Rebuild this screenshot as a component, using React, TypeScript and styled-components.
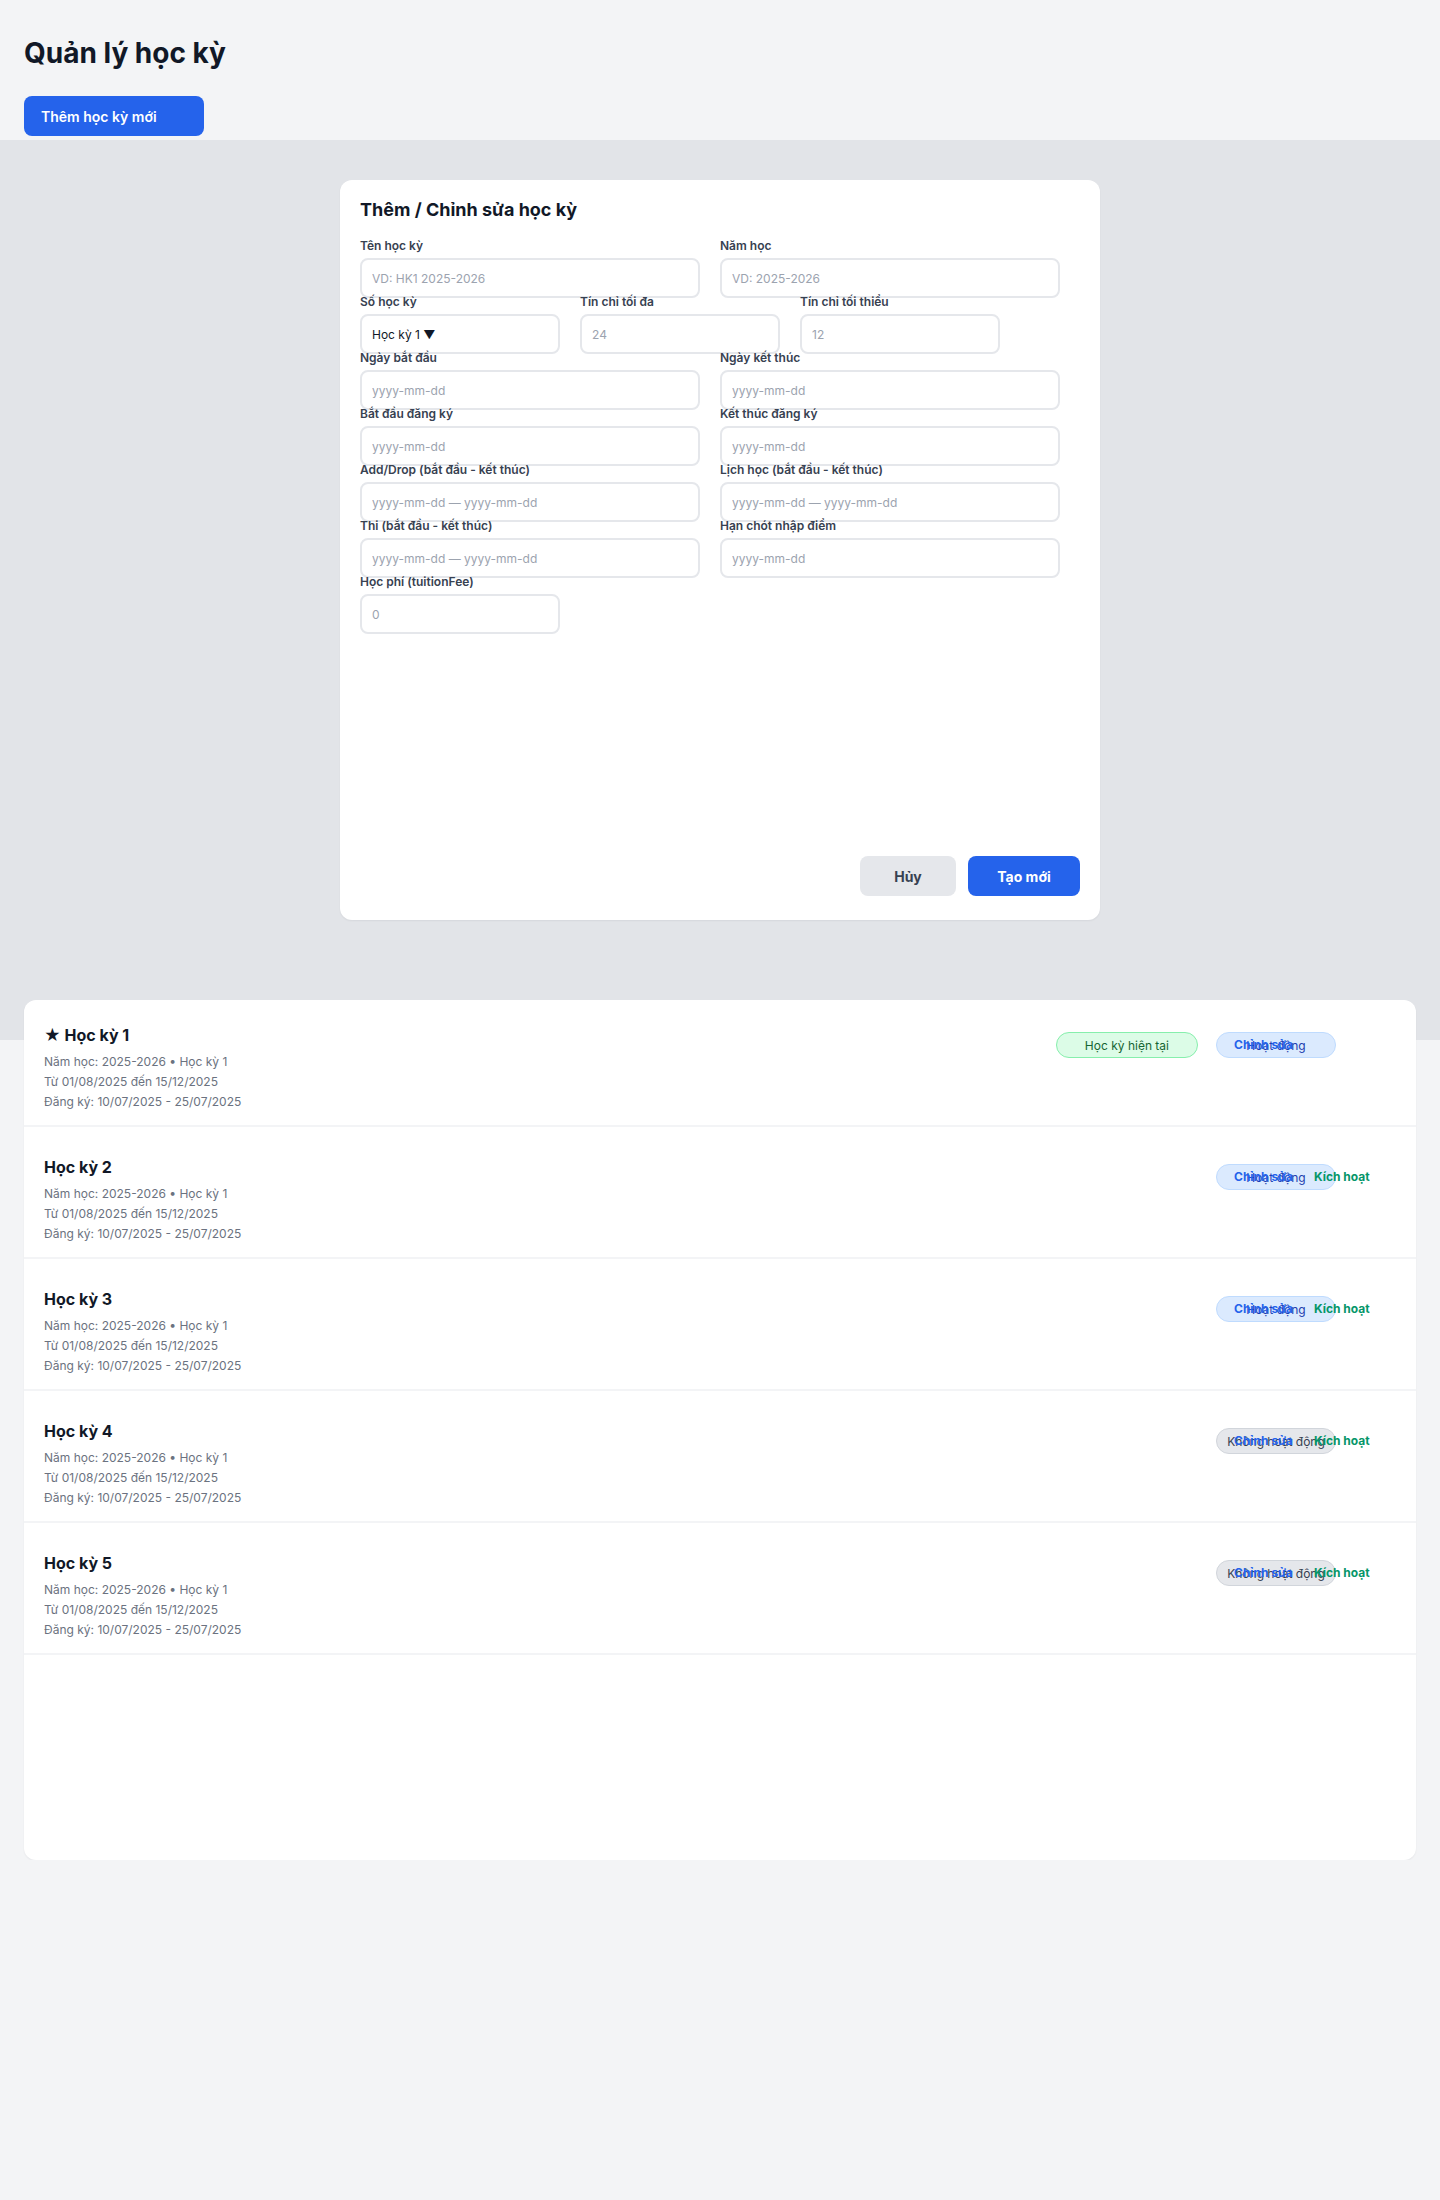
import React from 'react';
import styled, { createGlobalStyle } from 'styled-components';

const GlobalStyle = createGlobalStyle`
  html, body { margin: 0; padding: 0; background: #f3f4f6; }
  body { font-family: Inter, "Noto Sans", "DejaVu Sans", sans-serif; color: #111827; }
  *, *::before, *::after { box-sizing: border-box; }
  button, input { font-family: inherit; }
`;

const Header = styled.header`
  padding: 36px 24px 4px;
`;

const PageTitle = styled.h1`
  margin: 0 0 26px;
  font-size: 28px;
  line-height: 34px;
  font-weight: 700;
  color: #111827;
`;

const PrimaryButton = styled.button`
  display: block;
  width: 180px;
  height: 40px;
  padding: 0 17px;
  text-align: left;
  background: #2563eb;
  color: #ffffff;
  border: none;
  border-radius: 8px;
  font-size: 14px;
  font-weight: 600;
  cursor: pointer;
`;

const Backdrop = styled.section`
  height: 900px;
  padding-top: 40px;
  background: #e2e4e8;
  display: flex;
  justify-content: center;
  align-items: flex-start;
`;

const Modal = styled.div`
  width: 760px;
  height: 740px;
  background: #ffffff;
  border-radius: 12px;
  padding: 18px 20px 24px;
  display: flex;
  flex-direction: column;
  box-shadow: 0 1px 2px rgba(15, 23, 42, 0.06);
`;

const ModalTitle = styled.h2`
  margin: 0 0 16px;
  font-size: 18px;
  line-height: 24px;
  font-weight: 700;
  color: #111827;
`;

const Form = styled.div`
  display: flex;
  flex-direction: column;
`;

const FieldRow = styled.div`
  display: flex;
  gap: 20px;
  height: 56px;
`;

const Field = styled.div<{ $w: number }>`
  width: ${(p) => p.$w}px;
  flex-shrink: 0;
  display: flex;
  flex-direction: column;
`;

const Label = styled.label`
  flex-shrink: 0;
  font-size: 12px;
  line-height: 15px;
  font-weight: 600;
  color: #374151;
  white-space: nowrap;
`;

const Input = styled.input`
  flex-shrink: 0;
  margin-top: 5px;
  height: 40px;
  width: 100%;
  border: 2px solid #e5e7eb;
  border-radius: 8px;
  padding: 0 10px;
  font-size: 12px;
  color: #111827;
  background: #ffffff;
  outline: none;
  &::placeholder { color: #9ca3af; }
`;

const SelectBox = styled.button`
  flex-shrink: 0;
  margin-top: 5px;
  height: 40px;
  width: 100%;
  border: 2px solid #e5e7eb;
  border-radius: 8px;
  padding: 0 10px;
  font-size: 12px;
  color: #111827;
  background: #ffffff;
  text-align: left;
`;

const ModalActions = styled.div`
  margin-top: auto;
  display: flex;
  justify-content: flex-end;
  gap: 12px;
`;

const ModalButton = styled.button<{ $primary?: boolean; $w: number }>`
  width: ${(p) => p.$w}px;
  height: 40px;
  border: none;
  border-radius: 8px;
  font-size: 14px;
  font-weight: 700;
  background: ${(p) => (p.$primary ? '#2563eb' : '#e5e7eb')};
  color: ${(p) => (p.$primary ? '#ffffff' : '#374151')};
  cursor: pointer;
`;

const ListSection = styled.section`
  padding: 0 24px;
  margin-top: -40px;
`;

const ListCard = styled.div`
  background: #ffffff;
  border-radius: 12px;
  height: 860px;
  display: flex;
  flex-direction: column;
  box-shadow: 0 1px 2px rgba(15, 23, 42, 0.06);
`;

const RowList = styled.ul`
  list-style: none;
  margin: -5px 0 0;
  padding: 0;
`;

const Row = styled.li`
  height: 132px;
  padding: 28px 20px 0;
  border-bottom: 2px solid #f3f4f6;
  display: flex;
  justify-content: space-between;
  align-items: flex-start;
`;

const RowInfo = styled.div`
  display: flex;
  flex-direction: column;
`;

const RowTitle = styled.h3`
  margin: 0 0 5px;
  font-size: 16px;
  line-height: 24px;
  font-weight: 700;
  color: #111827;
`;

const Meta = styled.p`
  margin: 0;
  font-size: 12px;
  line-height: 20px;
  color: #6b7280;
`;

const RowSide = styled.div`
  margin-top: 9px;
  display: flex;
  align-items: center;
  gap: 18px;
`;

const CurrentBadge = styled.span`
  height: 26px;
  padding: 0 28px;
  border-radius: 999px;
  background: #dcfce7;
  border: 1px solid #86efac;
  color: #166534;
  font-size: 12px;
  display: inline-flex;
  align-items: center;
  white-space: nowrap;
`;

const StatusPill = styled.span<{ $active: boolean }>`
  width: 120px;
  height: 26px;
  border-radius: 999px;
  display: inline-flex;
  align-items: center;
  justify-content: center;
  font-size: 12px;
  white-space: nowrap;
  background: ${(p) => (p.$active ? '#dbeafe' : '#e5e7eb')};
  border: 1px solid ${(p) => (p.$active ? '#bfdbfe' : '#d1d5db')};
  color: ${(p) => (p.$active ? '#1e40af' : '#374151')};
`;

const RowActions = styled.div`
  width: 162px;
  margin-left: -120px;
  display: grid;
  grid-template-columns: 80px auto;
  align-items: center;
`;

const LinkButton = styled.button<{ $tone: 'blue' | 'green' }>`
  background: none;
  border: none;
  padding: 0;
  text-align: left;
  font-size: 12px;
  line-height: 16px;
  font-weight: 700;
  white-space: nowrap;
  color: ${(p) => (p.$tone === 'blue' ? '#2563eb' : '#059669')};
  cursor: pointer;
`;

type Sem = { name: string; current?: boolean; active: boolean };

const semesters: Sem[] = [
  { name: '★ Học kỳ 1', current: true, active: true },
  { name: 'Học kỳ 2', active: true },
  { name: 'Học kỳ 3', active: true },
  { name: 'Học kỳ 4', active: false },
  { name: 'Học kỳ 5', active: false },
];

export default function App() {
  return (
    <>
      <GlobalStyle />
      <Header>
        <PageTitle>Quản lý học kỳ</PageTitle>
        <PrimaryButton>Thêm học kỳ mới</PrimaryButton>
      </Header>

      <Backdrop>
        <Modal>
          <ModalTitle>Thêm / Chỉnh sửa học kỳ</ModalTitle>
          <Form>
            <FieldRow>
              <Field $w={340}>
                <Label>Tên học kỳ</Label>
                <Input placeholder="VD: HK1 2025-2026" />
              </Field>
              <Field $w={340}>
                <Label>Năm học</Label>
                <Input placeholder="VD: 2025-2026" />
              </Field>
            </FieldRow>
            <FieldRow>
              <Field $w={200}>
                <Label>Số học kỳ</Label>
                <SelectBox>Học kỳ 1 ▼</SelectBox>
              </Field>
              <Field $w={200}>
                <Label>Tín chỉ tối đa</Label>
                <Input placeholder="24" />
              </Field>
              <Field $w={200}>
                <Label>Tín chỉ tối thiểu</Label>
                <Input placeholder="12" />
              </Field>
            </FieldRow>
            <FieldRow>
              <Field $w={340}>
                <Label>Ngày bắt đầu</Label>
                <Input placeholder="yyyy-mm-dd" />
              </Field>
              <Field $w={340}>
                <Label>Ngày kết thúc</Label>
                <Input placeholder="yyyy-mm-dd" />
              </Field>
            </FieldRow>
            <FieldRow>
              <Field $w={340}>
                <Label>Bắt đầu đăng ký</Label>
                <Input placeholder="yyyy-mm-dd" />
              </Field>
              <Field $w={340}>
                <Label>Kết thúc đăng ký</Label>
                <Input placeholder="yyyy-mm-dd" />
              </Field>
            </FieldRow>
            <FieldRow>
              <Field $w={340}>
                <Label>Add/Drop (bắt đầu - kết thúc)</Label>
                <Input placeholder="yyyy-mm-dd — yyyy-mm-dd" />
              </Field>
              <Field $w={340}>
                <Label>Lịch học (bắt đầu - kết thúc)</Label>
                <Input placeholder="yyyy-mm-dd — yyyy-mm-dd" />
              </Field>
            </FieldRow>
            <FieldRow>
              <Field $w={340}>
                <Label>Thi (bắt đầu - kết thúc)</Label>
                <Input placeholder="yyyy-mm-dd — yyyy-mm-dd" />
              </Field>
              <Field $w={340}>
                <Label>Hạn chót nhập điểm</Label>
                <Input placeholder="yyyy-mm-dd" />
              </Field>
            </FieldRow>
            <FieldRow>
              <Field $w={200}>
                <Label>Học phí (tuitionFee)</Label>
                <Input placeholder="0" />
              </Field>
            </FieldRow>
          </Form>
          <ModalActions>
            <ModalButton $w={96}>Hủy</ModalButton>
            <ModalButton $w={112} $primary>Tạo mới</ModalButton>
          </ModalActions>
        </Modal>
      </Backdrop>

      <ListSection>
        <ListCard>
          <RowList>
            {semesters.map((s) => (
              <Row key={s.name}>
                <RowInfo>
                  <RowTitle>{s.name}</RowTitle>
                  <Meta>Năm học: 2025-2026 • Học kỳ 1</Meta>
                  <Meta>Từ 01/08/2025 đến 15/12/2025</Meta>
                  <Meta>Đăng ký: 10/07/2025 - 25/07/2025</Meta>
                </RowInfo>
                <RowSide>
                  {s.current && <CurrentBadge>Học kỳ hiện tại</CurrentBadge>}
                  <StatusPill $active={s.active}>{s.active ? 'Hoạt động' : 'Không hoạt động'}</StatusPill>
                  <RowActions>
                    <LinkButton $tone="blue">Chỉnh sửa</LinkButton>
                    {!s.current && <LinkButton $tone="green">Kích hoạt</LinkButton>}
                  </RowActions>
                </RowSide>
              </Row>
            ))}
          </RowList>
        </ListCard>
      </ListSection>
    </>
  );
}
